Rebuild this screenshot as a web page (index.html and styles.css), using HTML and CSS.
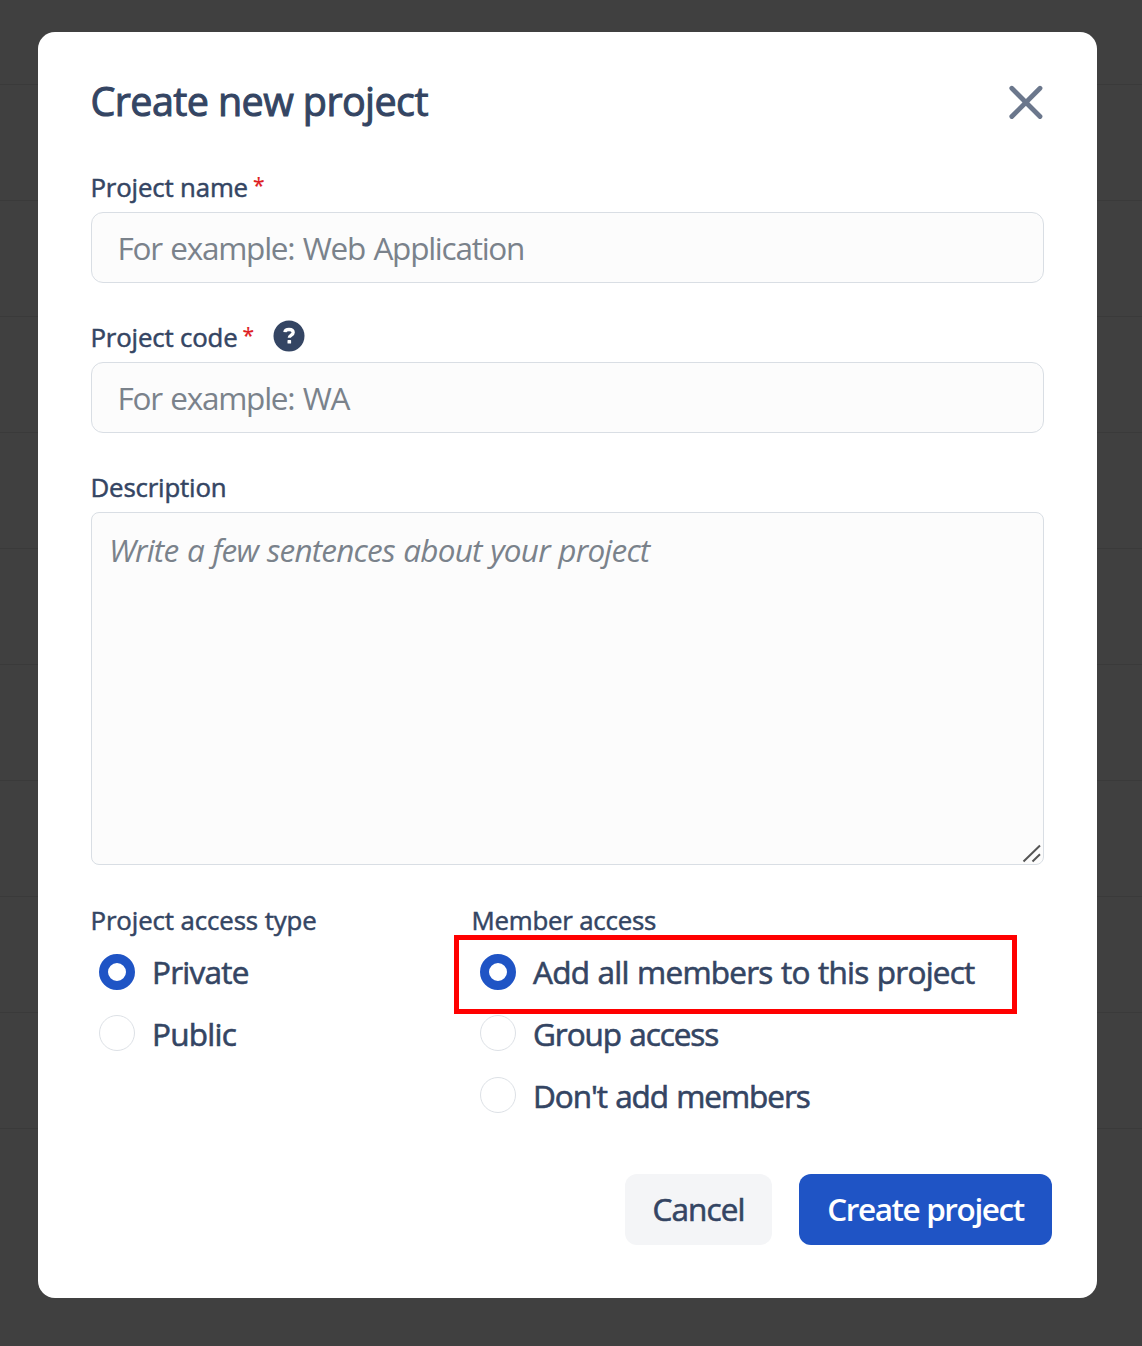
FILE: index.html
```html
<!DOCTYPE html>
<html lang="en">
<head>
<meta charset="utf-8">
<title>Create new project</title>
<link rel="stylesheet" href="styles.css">
</head>
<body>
<main class="backdrop">
  <form class="modal" role="dialog" aria-labelledby="title">
    <header class="modal-header">
      <h1 class="modal-title" id="title">Create new project</h1>
      <button class="close" type="button" aria-label="Close">
        <svg width="36" height="36" viewBox="0 0 36 36"><path d="M3.8 3.3 32 31.500M32 3.3 3.8 31.500"/></svg>
      </button>
    </header>

    <div class="field">
      <label class="label" for="name">Project name<span class="req">*</span></label>
      <input class="input" id="name" type="text" placeholder="For example: Web Application">
    </div>

    <div class="field">
      <label class="label" for="code">Project code<span class="req">*</span>
        <svg class="help" width="32" height="32" viewBox="0 0 32 32"><circle cx="16" cy="16" r="15.5"/><path d="M11.9 12.1C12.2 9.9 13.7 9.5 16 9.5c2.700 0 4.200 1 4.200 3.100 0 2.600-3.900 2.600-3.900 5.200"/><rect x="14.500" y="20.100" width="3.600" height="3.400" rx=".6"/></svg>
      </label>
      <input class="input" id="code" type="text" placeholder="For example: WA">
    </div>

    <div class="field">
      <label class="label" for="desc">Description</label>
      <div class="area-wrap">
        <textarea class="area" id="desc" placeholder="Write a few sentences about your project"></textarea>
        <svg class="grip" width="20" height="20" viewBox="0 0 20 20"><path d="M1.500 17.500 18 1.500M10.500 17.500 18 10.300"/></svg>
      </div>
    </div>

    <div class="access">
      <fieldset class="group">
        <legend class="label label-wide">Project access type</legend>
        <label class="option"><input class="radio" type="radio" name="type" checked>Private</label>
        <label class="option"><input class="radio" type="radio" name="type">Public</label>
      </fieldset>
      <fieldset class="group">
        <legend class="label">Member access</legend>
        <label class="option option-marked"><input class="radio" type="radio" name="member" checked>Add all members to this project</label>
        <label class="option option-tight"><input class="radio" type="radio" name="member">Group access</label>
        <label class="option option-tight"><input class="radio" type="radio" name="member">Don't add members</label>
      </fieldset>
    </div>

    <footer class="actions">
      <button class="btn btn-cancel" type="button">Cancel</button>
      <button class="btn btn-create" type="button">Create project</button>
    </footer>
  </form>
</main>
</body>
</html>
```
FILE: styles.css
```css
*,
*::after { box-sizing: border-box; }

body {
  margin: 0;
  font-family: "Open Sans", "Noto Sans", sans-serif;
  color: #344563;
}

.backdrop {
  height: 1346px;
  padding: 31.5px 45.5px 48px 37.5px;
  overflow: hidden;
  background: repeating-linear-gradient(#404040 0 115px, #3a3a3a 115px 116px) 0 -31px / 100% 1160px no-repeat #404040;
}

.modal {
  height: 1266px;
  padding: 46.5px 53px 0;
  border-radius: 17px;
  background: #fff;
}

.modal-header {
  display: flex;
  justify-content: space-between;
  height: 90px;
}

.modal-title {
  margin: 0;
  padding-top: 1px;
  font-size: 39.5px;
  line-height: 44px;
  font-weight: 400;
  letter-spacing: -0.6px;
  -webkit-text-stroke: 1px currentColor;
  white-space: nowrap;
}

.close {
  width: 36px;
  height: 36px;
  margin-top: 6.5px;
  padding: 0;
  border: 0;
  background: none;
}

.close svg {
  display: block;
  fill: none;
  stroke: #6b778c;
  stroke-width: 4.8;
  stroke-linecap: round;
}

.field { margin-bottom: 35.75px; }

.label {
  display: flex;
  align-items: center;
  height: 36px;
  margin-bottom: 8px;
  padding: 1px 0 0;
  font-size: 25.8px;
  line-height: 36px;
  letter-spacing: -0.2px;
  -webkit-text-stroke: 0.5px currentColor;
  white-space: nowrap;
}

.field .label { letter-spacing: -0.16px; }

.label-wide { letter-spacing: -0.1px; }

.req {
  margin: -3px 0 0 5px;
  color: #de1c22;
  font-size: 21px;
  -webkit-text-stroke: 0.2px currentColor;
}

.help {
  margin: -2px 0 0 19px;
  fill: #344563;
}

.help path {
  fill: none;
  stroke: #fff;
  stroke-width: 3.3;
}

.help rect { fill: #fff; }

.input,
.area {
  display: block;
  width: 100%;
  margin: 0;
  border: 1.5px solid #d9dee4;
  background: #fcfcfc;
  color: #344563;
  font-family: inherit;
  font-size: 31.5px;
  outline: 0;
}

.input {
  height: 70.5px;
  padding: 0 26px;
  border-radius: 12px;
  letter-spacing: -1.25px;
  word-spacing: 1.5px;
}

.area-wrap { position: relative; }

.area {
  height: 352.5px;
  margin-top: -0.5px;
  padding: 14.5px 17.5px;
  border-radius: 8px;
  line-height: 44px;
  letter-spacing: -0.8px;
  word-spacing: 1.2px;
  resize: none;
}

.input::placeholder,
.area::placeholder {
  color: #7a828b;
  opacity: 1;
}

.area::placeholder { font-style: italic; }

.grip {
  position: absolute;
  right: 2px;
  bottom: 0.5px;
  fill: none;
  stroke: #555;
  stroke-width: 2;
}

.access {
  display: grid;
  grid-template-columns: 381px 1fr;
  height: 273.8px;
  padding-top: 0.9px;
}

.group {
  min-width: 0;
  margin: 0;
  padding: 0;
  border: 0;
}

.group .label { margin-bottom: 3.5px; }

.option {
  display: flex;
  align-items: center;
  height: 61.8px;
  padding-left: 8.5px;
  font-size: 31.5px;
  letter-spacing: -0.75px;
  word-spacing: 1px;
  -webkit-text-stroke: 0.6px currentColor;
  white-space: nowrap;
}

.option-tight { letter-spacing: -1.05px; }

.option-marked {
  position: relative;
  letter-spacing: -0.77px;
}

.option-marked::after {
  content: "";
  position: absolute;
  left: -17.5px;
  top: -6px;
  width: 563px;
  height: 79px;
  border: 5px solid #f00;
}

.radio {
  appearance: none;
  flex: none;
  width: 36px;
  height: 36px;
  margin: 0 17px 0 0;
  border: 1.5px solid #dde1e6;
  border-radius: 50%;
  background: #fff;
}

.radio:checked { border: 9.5px solid #1f54c5; }

.actions {
  display: flex;
  justify-content: flex-end;
  gap: 27px;
  margin-right: -8.5px;
}

.btn {
  height: 70.5px;
  padding: 0 0 2px;
  border: 0;
  border-radius: 12px;
  font-family: inherit;
  font-size: 31.5px;
  white-space: nowrap;
}

.btn-cancel {
  width: 147px;
  background: #f4f5f7;
  color: #344563;
  letter-spacing: -0.9px;
  -webkit-text-stroke: 0.6px currentColor;
}

.btn-create {
  width: 253px;
  background: #1f54c5;
  color: #fff;
  font-weight: 600;
  letter-spacing: -1.4px;
}
```
